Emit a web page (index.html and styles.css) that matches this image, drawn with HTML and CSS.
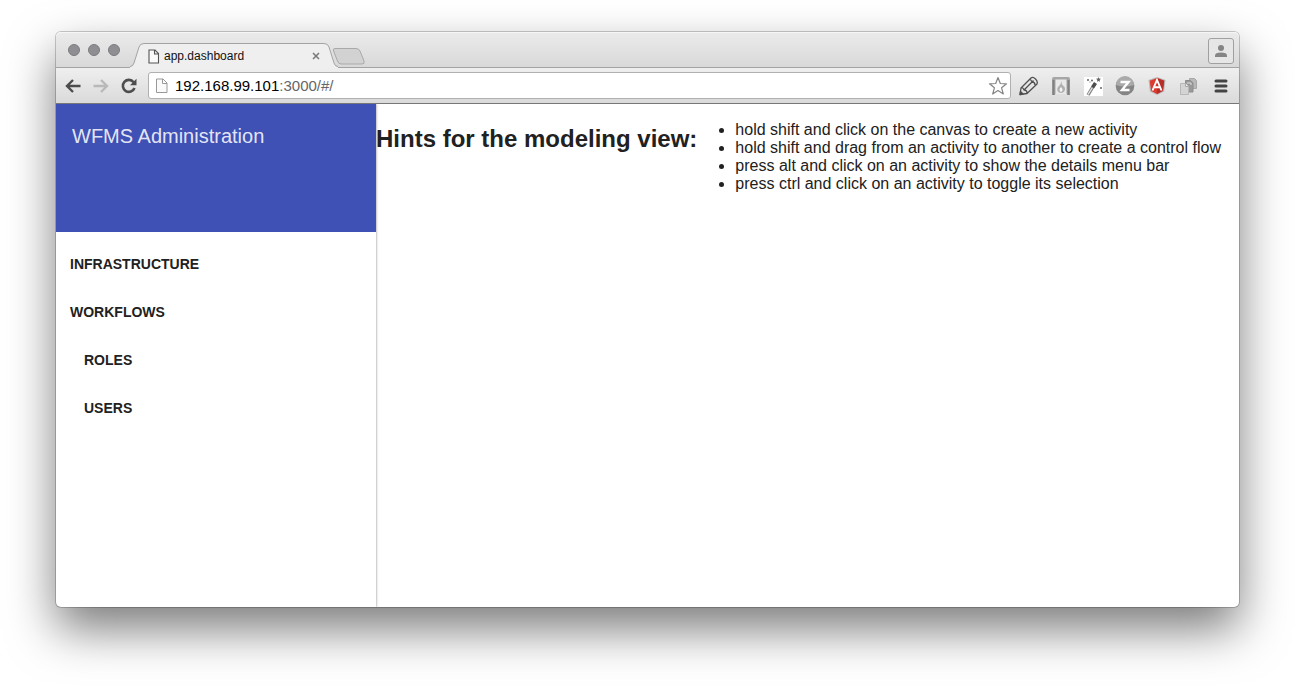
FILE: index.html
```html
<!DOCTYPE html>
<html lang="en">
<head>
<meta charset="utf-8">
<meta name="viewport" content="width=device-width, initial-scale=1">
<title>app.dashboard</title>
<link rel="stylesheet" href="styles.css">
</head>
<body>
<div class="window">
  <header class="tabstrip">
    <div class="lights">
      <button class="light" aria-label="Close window"></button>
      <button class="light" aria-label="Minimize window"></button>
      <button class="light" aria-label="Zoom window"></button>
    </div>
    <div class="tab">
      <svg class="tab-edge" width="14" height="25" viewBox="0 0 14 25"><path d="M0 25V24Q3 23.500 4 20L9 4Q10 .5 14 .5V25Z" fill="#efefef"/><path d="M0 23.500Q3 23.500 4 20L9 4Q10 .5 14 .5" fill="none" stroke="#a3a3a3"/></svg>
      <div class="tab-body">
        <svg width="12" height="15" viewBox="0 0 12 15" fill="#fafafa" stroke="#555" stroke-width="1.100"><path d="M1 1h6l3.500 3.500V14H1zM6.500 1v4h4"/></svg>
        <span class="tab-title">app.dashboard</span>
        <button class="icon-button" aria-label="Close tab"><svg width="8" height="8" viewBox="0 0 8 8" stroke="#777" stroke-width="1.500"><path d="M1 1l6 6M7 1L1 7"/></svg></button>
      </div>
      <svg class="tab-edge" width="14" height="25" viewBox="0 0 14 25"><path d="M14 25V24Q11 23.500 10 20L5 4Q4 .5 0 .5V25Z" fill="#efefef"/><path d="M14 23.500Q11 23.500 10 20L5 4Q4 .5 0 .5" fill="none" stroke="#a3a3a3"/></svg>
    </div>
    <button class="icon-button new-tab" aria-label="New tab"><svg width="34" height="17" viewBox="0 0 34 17"><path d="M3 .5H24Q27 .5 28 3L32 13Q33 16 30 16H9Q6.500 16 5.500 13L1.500 3Q.5 .5 3 .5Z" fill="#d2d2d2" stroke="#a9a9a9"/></svg></button>
    <button class="profile" aria-label="Profile"><svg width="14" height="14" viewBox="0 0 14 14" fill="#858585"><circle cx="7" cy="4" r="3"/><path d="M1 13V11.500Q1 8.500 7 8.500T13 11.500V13Z"/></svg></button>
  </header>
  <nav class="toolbar" aria-label="Browser">
    <button class="icon-button" aria-label="Back"><svg width="16" height="16" viewBox="0 0 16 16" fill="none" stroke="#4d4d4d" stroke-width="2.400"><path d="M15.500 8H2M8 2L2 8l6 6"/></svg></button>
    <button class="icon-button forward" aria-label="Forward"><svg width="16" height="16" viewBox="0 0 16 16" fill="none" stroke="#b9b9b9" stroke-width="2.400"><path d="M.5 8H14M8 2l6 6-6 6"/></svg></button>
    <button class="icon-button reload" aria-label="Reload"><svg width="16" height="16" viewBox="0 0 16 16"><path d="M12.600 4.200A6 6 0 1 0 13.500 10" fill="none" stroke="#4d4d4d" stroke-width="2.600"/><path d="M15.500 .8V7.300H9Z" fill="#4d4d4d"/></svg></button>
    <div class="omnibox">
      <svg width="14" height="16" viewBox="0 0 14 16" fill="#fafafa" stroke="#999"><path d="M1.500 1h6.500l4 4v9.500H1.500zM7.500 1v4.500H12"/></svg>
      <a class="url" href="#/">192.168.99.101<span class="url-path">:3000/#/</span></a>
      <button class="icon-button" aria-label="Bookmark"><svg width="20" height="20" viewBox="0 0 20 20"><path d="M10 1.500l2.300 6 6.200.3-4.900 4 1.700 6.200L10 14.600 4.700 18l1.700-6.200-4.900-4 6.200-.3Z" fill="#fff" stroke="#858585" stroke-width="1.200" stroke-linejoin="round"/></svg></button>
    </div>
    <div class="extensions">
      <button class="icon-button" aria-label="Pencil"><svg width="20" height="20" viewBox="0 0 20 20" fill="none" stroke="#505050" stroke-width="1.300" stroke-linejoin="round"><path d="M1 18.500l1-6.500L12 2q2-1.500 4.500 1t1.500 5L8 17.500ZM2 12q2-1 3 2 3 0 3 3.500M5 14l9.500-9.500M10.500 3.500q1-.5 2.500 2.500 3 0 3 3"/><path d="M1 18.500l.5-3L4 18Z" fill="#444"/></svg></button>
      <button class="icon-button" aria-label="Flame"><svg width="20" height="20" viewBox="0 0 20 20"><path d="M3 1h14q2 0 2 2v16h-3v-1H4v1H1V3q0-2 2-2Z" fill="#a6a6a6"/><path d="M2.500 4v15M17.500 4v15" stroke="#808080" stroke-width="2"/><path d="M4.500 3.500h11v14.500h-11z" fill="#e9e9e9"/><path d="M10.500 5q-.5 3 2 5t1 5q-1 2-3.500 2t-3.500-2q-1-3 1.500-5 2-2 2.500-5Z" fill="#b0b0b0"/><path d="M10 11q3 3 0 5-3-2 0-5" fill="#f5f5f5"/></svg></button>
      <button class="icon-button" aria-label="Wand"><svg width="20" height="20" viewBox="0 0 20 20"><path fill="#fff" d="M1 1h19v19H1z"/><path d="M5 19l4.500-7.500" stroke="#858585" stroke-width="3.400"/><path d="M5 18.500l4.500-7" stroke="#eee" stroke-width="1.200"/><path d="M9.500 11.500l3-4.500" stroke="#4d4d4d" stroke-width="3.600"/><g fill="#666"><path d="M15.500 1l.7 1.500 1.800.3-1.300 1.200.3 1.800-1.500-.9-1.500.9.3-1.800L13 2.800l1.800-.3Z"/><circle cx="5" cy="4" r="1"/><circle cx="9" cy="4.500" r="1"/><circle cx="18" cy="12" r="1"/><circle cx="7" cy="6" r=".6"/></g></svg></button>
      <button class="icon-button" aria-label="Z extension"><svg width="20" height="20" viewBox="0 0 20 20"><circle cx="10" cy="10" r="9.300" fill="#858585"/><path d="M1 9a9 9 0 0 1 18 0Q10 12 1 9Z" fill="#aaa"/><path d="M5.500 6H13.500L7 14h7.500" fill="none" stroke="#fff" stroke-width="2.400"/></svg></button>
      <button class="icon-button" aria-label="Angular extension"><svg width="20" height="20" viewBox="0 0 20 20"><path d="M10 1l8.500 3-1.400 11.500L10 19l-7.100-3.500L1.500 4Z" fill="#b7b7b7"/><path d="M10 2l7.200 2.700-1.200 10L10 18l-6-3.300-1.200-10Z" fill="#dc392f"/><path d="M10 2l7.200 2.700-1.200 10L10 18Z" fill="#b82d27"/><path d="M5.500 14.500L10 4l4.500 10.500M7.500 11.200h5" fill="none" stroke="#fff" stroke-width="1.900"/></svg></button>
      <button class="icon-button" aria-label="Pages extension"><svg width="20" height="20" viewBox="0 0 20 20" stroke="#a8a8a8"><path d="M10.500 2.500h5l2 2v8h-7z" fill="#b8b8b8"/><path d="M6.500 4.500h5l2.500 2.500v9H6.500z" fill="#999" stroke="#8c8c8c"/><path d="M8 7h4v2" stroke="#ddd" fill="none"/><path d="M1.500 7.500h5l3 3v8h-8z" fill="#d4d4d4" stroke="#b8b8b8"/><path d="M6.500 7.500v3h3" fill="#eee"/></svg></button>
      <button class="icon-button" aria-label="Browser menu"><svg width="20" height="20" viewBox="0 0 20 20" stroke="#444" stroke-width="3" stroke-linecap="round"><path d="M5 5h10M5 10h10M5 15h10"/></svg></button>
    </div>
  </nav>
  <div class="page">
    <aside class="sidebar">
      <div class="brand"><h1 class="brand-title">WFMS Administration</h1></div>
      <nav class="menu" aria-label="Administration">
        <a class="menu-item" href="#/infrastructure">Infrastructure</a>
        <a class="menu-item" href="#/workflows">Workflows</a>
        <a class="menu-item nested" href="#/roles">Roles</a>
        <a class="menu-item nested" href="#/users">Users</a>
      </nav>
    </aside>
    <main class="content">
      <h2 class="hints-title">Hints for the modeling view:</h2>
      <ul class="hints">
        <li>hold shift and click on the canvas to create a new activity</li>
        <li>hold shift and drag from an activity to another to create a control flow</li>
        <li>press alt and click on an activity to show the details menu bar</li>
        <li>press ctrl and click on an activity to toggle its selection</li>
      </ul>
    </main>
  </div>
</div>
</body>
</html>
```
FILE: styles.css
```css
* { box-sizing: border-box; }
body {
  margin: 0;
  min-height: 100vh;
  padding: 32px 56px 80px;
  display: flex;
  overflow: hidden;
  background: #fff;
  color: #212121;
  font-family: "Liberation Sans", Arial, sans-serif;
}
button { margin: 0; padding: 0; border: 0; background: none; }
svg { display: block; flex: none; }
a { color: inherit; text-decoration: none; }
.window {
  flex: 1;
  min-width: 0;
  display: flex;
  flex-direction: column;
  border-radius: 5px;
  background: #fff;
  box-shadow: 0 0 0 1px rgba(0, 0, 0, .2), 0 22px 48px rgba(0, 0, 0, .52);
}
.tabstrip {
  height: 36px;
  display: flex;
  align-items: flex-end;
  border-radius: 5px 5px 0 0;
  background: linear-gradient(#ebebeb, #d8d8d8);
  box-shadow: inset 0 1px #f6f6f6, inset 0 -1px #a3a3a3;
}
.lights { align-self: center; display: flex; gap: 8px; padding: 0 4px 0 12px; }
.light { width: 12px; height: 12px; border: 1px solid #7c7c80; border-radius: 50%; background: #8e8e93; }
.tab { display: flex; height: 25px; width: 208px; margin-left: 6px; }
.tab-body {
  flex: 1;
  display: flex;
  align-items: center;
  gap: 4px;
  padding: 0 4px;
  border-top: 1px solid #a3a3a3;
  background: #efefef;
}
.tab-title { flex: 1; font-size: 12px; line-height: 16px; color: #111; }
.icon-button { display: flex; align-items: center; justify-content: center; }
.new-tab { margin: 0 0 3px -6px; }
.profile {
  width: 26px;
  height: 26px;
  margin: 0 5px 4px auto;
  display: flex;
  align-items: center;
  justify-content: center;
  border: 1px solid #a0a0a0;
  border-radius: 3px;
  background: #e6e6e6;
}
.toolbar {
  height: 36px;
  display: flex;
  align-items: center;
  padding: 0 8px 0 9px;
  background: linear-gradient(#efefef, #dadada);
  border-bottom: 1px solid #777;
}
.forward { margin-left: 12px; }
.reload { margin: 0 11px 0 12px; }
.omnibox {
  flex: 1;
  min-width: 0;
  height: 27px;
  display: flex;
  align-items: center;
  gap: 6px;
  padding: 0 2px 0 6px;
  border: 1px solid #b0b0b0;
  border-radius: 3px;
  background: #fff;
}
.url { flex: 1; font-size: 15px; line-height: 20px; color: #000; }
.url-path { color: #666; }
.extensions { display: flex; gap: 12px; margin-left: 8px; }
.page { flex: 1; display: flex; border-radius: 0 0 5px 5px; }
.sidebar {
  flex: none;
  width: 320px;
  border-radius: 0 0 0 5px;
  box-shadow: 1px 0 2px rgba(0, 0, 0, .24);
  clip-path: inset(0 -4px 0 0);
}
.brand { height: 128px; padding: 20px 16px; background: #3f51b5; }
.brand-title { margin: 0; font-size: 20px; line-height: 24px; font-weight: 400; color: rgba(255, 255, 255, .87); }
.menu { padding-top: 8px; }
.menu-item {
  display: block;
  padding: 0 14px;
  font-size: 14px;
  line-height: 48px;
  font-weight: 700;
  text-transform: uppercase;
}
.nested { padding-left: 28px; }
.content { flex: 1; min-width: 0; display: flex; align-items: flex-start; }
.hints-title { flex: none; margin: 20px 0; font-size: 24px; line-height: 30px; }
.hints { margin: 17px 0; padding-left: 38px; font-size: 16px; line-height: 18px; }
```
